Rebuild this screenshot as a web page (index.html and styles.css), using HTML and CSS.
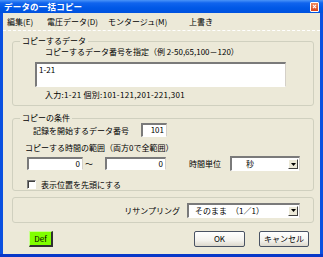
FILE: index.html
```html
<!DOCTYPE html>
<html lang="ja">
<head>
<meta charset="utf-8">
<title>データの一括コピー</title>
<link rel="stylesheet" href="styles.css">
</head>
<body>
<div class="window">
  <div class="titlebar">
    <span class="title">データの一括コピー</span>
    <span class="close"><svg viewBox="0 0 9 9" width="9" height="9"><path d="M2.5 2.5 L6.5 6.5 M6.5 2.5 L2.5 6.5" stroke="#fff" stroke-width="1.4" fill="none"/></svg></span>
  </div>
  <div class="client">
    <div class="menubar">
      <span class="menu m1">編集(E)</span>
      <span class="menu m2">電圧データ(D)</span>
      <span class="menu m3">モンタージュ(M)</span>
      <span class="menu m4">上書き</span>
    </div>
    <div class="content">
      <fieldset class="group g1">
        <legend>コピーするデータ</legend>
        <div class="line hint">コピーするデータ番号を指定（例 2-50,65,100－120）</div>
        <div class="textbox">1-21</div>
        <div class="line note">入力:1-21 個別:101-121,201-221,301</div>
      </fieldset>
      <fieldset class="group g2">
        <legend>コピーの条件</legend>
        <div class="row r1">
          <span>記録を開始するデータ番号</span>
          <span class="field num start">101</span>
        </div>
        <div class="line r2">コピーする時間の範囲（両方0で全範囲）</div>
        <div class="row r3">
          <span class="field num t1">0</span>
          <span class="tilde">～</span>
          <span class="field num t2">0</span>
          <span class="unit-label">時間単位</span>
          <span class="combo unit"><span class="combo-text">秒</span><span class="arrow"><svg viewBox="0 0 5 3" width="5" height="3"><path d="M0 0 H5 L2.5 3 Z" fill="#000"/></svg></span></span>
        </div>
        <div class="row r4">
          <span class="check"></span>
          <span>表示位置を先頭にする</span>
        </div>
      </fieldset>
      <div class="frame">
        <span>リサンプリング</span>
        <span class="combo resample"><span class="combo-text">そのまま　（1／1）</span><span class="arrow"><svg viewBox="0 0 5 3" width="5" height="3"><path d="M0 0 H5 L2.5 3 Z" fill="#000"/></svg></span></span>
      </div>
      <div class="buttons">
        <button class="def">Def</button>
        <span class="spacer"></span>
        <button class="btn ok">OK</button>
        <button class="btn cancel">キャンセル</button>
      </div>
    </div>
  </div>
</div>
</body>
</html>
```
FILE: styles.css
```css
* { box-sizing: border-box; }
html, body { margin: 0; padding: 0; }
body {
  font-family: "Noto Sans CJK JP", "Liberation Sans", sans-serif;
  font-size: 8px;
  color: #000;
  background: #fff;
}
.window {
  width: 323px;
  height: 257px;
  display: flex;
  flex-direction: column;
  background: #0a50e0;
  border-bottom: 3px solid #0838c8;
}
.titlebar {
  height: 13px;
  flex: none;
  display: flex;
  align-items: center;
  justify-content: space-between;
  padding: 0 4px 0 4px;
  background: linear-gradient(#4a94f8 0, #1064ee 3px, #0058e6 8px, #0052df 13px);
  color: #fff;
}
.title {
  font-weight: bold;
  font-size: 8.5px;
  line-height: 13px;
  letter-spacing: 0.2px;
}
.close {
  width: 9px;
  height: 10px;
  display: flex;
  align-items: center;
  justify-content: center;
  background: linear-gradient(#f08a60, #d8431c);
  border: 1px solid #fff;
  border-radius: 1px;
}
.client {
  flex: 1;
  margin: 0 3px;
  background: #ece9d8;
  display: flex;
  flex-direction: column;
}
.menubar {
  height: 18px;
  flex: none;
  display: flex;
  align-items: center;
  padding-left: 4px;
  border-bottom: 1px dashed #fff;
}
.m1 { width: 40px; }
.m2 { width: 61px; }
.m3 { width: 81px; }
.content {
  flex: 1;
  display: flex;
  flex-direction: column;
  padding: 0 6px 0 9px;
}
.group {
  margin: 0;
  padding: 0;
  border: 1px solid #d0d0bf;
  border-radius: 3px;
  min-width: 0;
}
.group legend {
  margin-left: 7px;
  padding: 0 2px;
  line-height: 10px;
}
.g1 { margin-top: 5px; padding-bottom: 5px; }
.line { line-height: 10px; }
.hint { margin: 1px 0 0 32px; }
.textbox {
  margin: 5px 0 0 22px;
  width: 251px;
  height: 25px;
  background: #fff;
  border-style: solid;
  border-width: 2px 1px 1px 2px;
  border-color: #7a7a7a #d4d0c8 #ffffff #7a7a7a;
  padding: 1px 2px;
  line-height: 10px;
}
.note { margin: 3px 0 0 32px; letter-spacing: 0.3px; }
.g2 { margin-top: 7px; padding-bottom: 1px; }
.row { display: flex; align-items: center; }
.r1 { height: 14px; padding-left: 20px; }
.field {
  background: #fff;
  border-style: solid;
  border-width: 2px 1px 1px 2px;
  border-color: #7a7a7a #d4d0c8 #ffffff #7a7a7a;
  line-height: 10px;
  height: 14px;
  padding: 0 2px;
}
.num { text-align: right; }
.start { margin-left: auto; margin-right: 146px; width: 26px; }
.r2 { margin: 6px 0 0 12px; }
.r3 { margin-top: 3px; height: 15px; padding-left: 14px; }
.t1 { width: 56px; height: 13px; }
.tilde { width: 22px; padding-left: 2px; }
.t2 { width: 61px; height: 13px; }
.unit-label { margin-left: 23px; width: 41px; }
.combo {
  display: flex;
  align-items: center;
  height: 15px;
  background: #fff;
  border-style: solid;
  border-width: 2px 1px 1px 2px;
  border-color: #7a7a7a #d4d0c8 #ffffff #7a7a7a;
  padding-right: 1px;
}
.combo-text { flex: 1; line-height: 10px; }
.unit { width: 70px; }
.unit .combo-text { padding-left: 14px; }
.arrow {
  width: 10px;
  height: 10px;
  display: flex;
  align-items: center;
  justify-content: center;
  background: #ece9d8;
  border-style: solid;
  border-width: 1px;
  border-color: #fff #404040 #404040 #fff;
}
.r4 { margin-top: 8px; height: 10px; padding-left: 14px; }
.check {
  width: 9px;
  height: 9px;
  margin-right: 5px;
  background: #fff;
  border-style: solid;
  border-width: 1px;
  border-color: #7a7a7a #fff #fff #7a7a7a;
  box-shadow: inset 1px 1px 0 #404040;
}
.frame {
  margin-top: 6px;
  height: 26px;
  border: 1px solid #d0d0bf;
  border-radius: 3px;
  display: flex;
  align-items: center;
  justify-content: flex-end;
  padding-right: 13px;
}
.frame > span:first-child { margin-right: 7px; }
.resample { width: 113px; }
.resample .combo-text { padding-left: 6px; }
.buttons {
  margin-top: 8px;
  display: flex;
  align-items: center;
  padding-left: 17px;
  padding-right: 5px;
}
.spacer { flex: 1; }
button {
  font-family: inherit;
  font-size: 8px;
  color: #000;
  padding: 0;
  line-height: 10px;
}
.def {
  width: 24px;
  height: 16px;
  background: #80ff00;
  border-style: solid;
  border-width: 1px 2px 2px 1px;
  border-color: #c8ff90 #303030 #303030 #c8ff90;
}
.btn {
  height: 16px;
  border: 1px solid #4a5363;
  border-radius: 2px;
  background: linear-gradient(#ffffff, #f4f3ee 60%, #dcd8cc);
}
.ok { width: 51px; }
.cancel { width: 50px; margin-left: 14px; }
```
